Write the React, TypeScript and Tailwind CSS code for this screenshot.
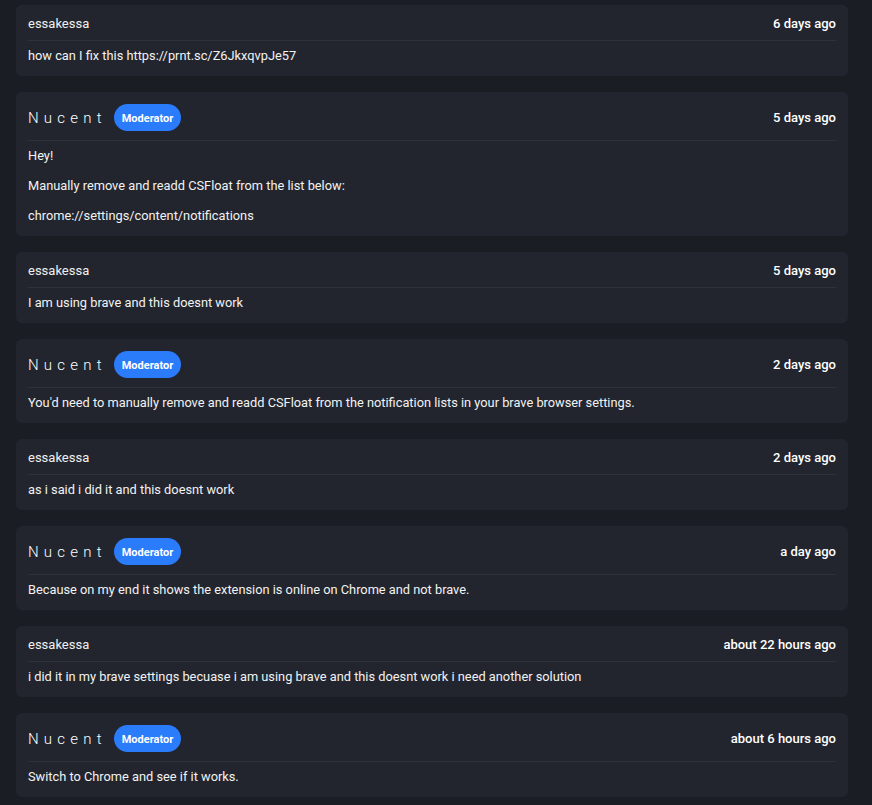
import React from "react";

type Msg = { mod: boolean; time: string; body: string[] };

const msgs: Msg[] = [
  { mod: false, time: "6 days ago", body: ["how can I fix this https://prnt.sc/Z6JkxqvpJe57"] },
  {
    mod: true,
    time: "5 days ago",
    body: ["Hey!", "Manually remove and readd CSFloat from the list below:", "chrome://settings/content/notifications"],
  },
  { mod: false, time: "5 days ago", body: ["I am using brave and this doesnt work"] },
  {
    mod: true,
    time: "2 days ago",
    body: ["You'd need to manually remove and readd CSFloat from the notification lists in your brave browser settings."],
  },
  { mod: false, time: "2 days ago", body: ["as i said i did it and this doesnt work"] },
  { mod: true, time: "a day ago", body: ["Because on my end it shows the extension is online on Chrome and not brave."] },
  {
    mod: false,
    time: "about 22 hours ago",
    body: ["i did it in my brave settings becuase i am using brave and this doesnt work i need another solution"],
  },
  { mod: true, time: "about 6 hours ago", body: ["Switch to Chrome and see if it works."] },
];

function Card({ m }: { m: Msg }) {
  return (
    <div className="rounded-md bg-[#22252e] px-3">
      <div className="flex items-center justify-between pt-3 pb-[9px] border-b border-[#2e313a]">
        {m.mod ? (
          <div className="flex items-center gap-[7px]">
            <span className="text-[15px] leading-[14px] tracking-[5.2px] font-light text-white">Nucent</span>
            <span className="h-[27px] px-2 rounded-full bg-[#2a7cfb] text-white text-[11px] leading-none font-bold flex items-center justify-center">
              <span className="pt-[2px]">Moderator</span>
            </span>
          </div>
        ) : (
          <span className="text-[13px] leading-[14px] text-[#f0f0f0]">essakessa</span>
        )}
        <span className="text-[13px] leading-[14px] font-medium text-white">{m.time}</span>
      </div>
      <div className="pt-[5px] pb-[10px] flex flex-col gap-[10px]">
        {m.body.map((b, i) => (
          <p key={i} className="text-[12.8px] leading-5 text-[#f2f2f2]">
            {b}
          </p>
        ))}
      </div>
    </div>
  );
}

export default function App() {
  return (
    <div
      className="min-h-[805px] bg-[#1b1d24] pt-[5px] pl-4 pr-6 flex flex-col gap-4"
      style={{ fontFamily: "Roboto, 'Liberation Sans', sans-serif" }}
    >
      {msgs.map((m, i) => (
        <Card key={i} m={m} />
      ))}
    </div>
  );
}
